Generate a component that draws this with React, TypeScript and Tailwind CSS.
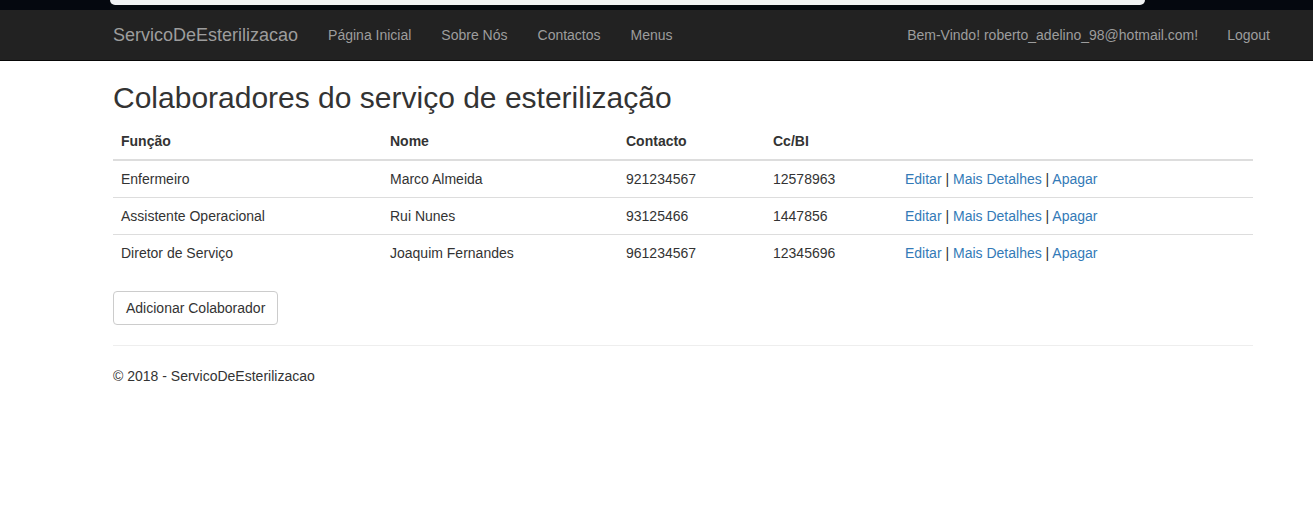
const rows = [
  { funcao: "Enfermeiro", nome: "Marco Almeida", contacto: "921234567", cc: "12578963" },
  { funcao: "Assistente Operacional", nome: "Rui Nunes", contacto: "93125466", cc: "1447856" },
  { funcao: "Diretor de Serviço", nome: "Joaquim Fernandes", contacto: "961234567", cc: "12345696" },
];

function Actions() {
  return (
    <span>
      <a className="text-[#337ab7]">Editar</a> | <a className="text-[#337ab7]">Mais Detalhes</a> |{" "}
      <a className="text-[#337ab7]">Apagar</a>
    </span>
  );
}

export default function App() {
  return (
    <div className="min-h-[522px] bg-white text-[14px] leading-[20px] text-[#333]" style={{ fontFamily: '"Liberation Sans", Arial, sans-serif' }}>
      {/* browser strip */}
      <div className="flex h-[10px] bg-[#05080f]">
        <div className="ml-[110px] h-[5px] w-[1035px] rounded-b-[10px] bg-[#f1f2f4]" />
      </div>

      {/* navbar */}
      <nav className="h-[51px] border-b border-[#080808] bg-[#222]">
        <div className="flex h-[50px] items-center pl-[113px] pr-[43px] text-[#9d9d9d]">
          <span className="text-[18px] leading-[20px]">ServicoDeEsterilizacao</span>
          <div className="ml-[30px] flex gap-[30px]">
            <span>Página Inicial</span>
            <span>Sobre Nós</span>
            <span>Contactos</span>
            <span>Menus</span>
          </div>
          <div className="ml-auto flex gap-[29px]">
            <span>Bem-Vindo! roberto_adelino_98@hotmail.com!</span>
            <span>Logout</span>
          </div>
        </div>
      </nav>

      <main className="ml-[113px] w-[1140px]">
        <h2 className="mt-[20px] mb-[9px] text-[30px] leading-[33px] font-normal">Colaboradores do serviço de esterilização</h2>

        <table className="mb-[20px] w-full border-collapse">
          <thead>
            <tr className="border-b-2 border-[#ddd] text-left font-bold">
              <th className="w-[269px] p-[8px]">Função</th>
              <th className="w-[236px] p-[8px]">Nome</th>
              <th className="w-[147px] p-[8px]">Contacto</th>
              <th className="w-[132px] p-[8px]">Cc/BI</th>
              <th className="p-[8px]"></th>
            </tr>
          </thead>
          <tbody>
            {rows.map((r, i) => (
              <tr key={r.cc} className={i > 0 ? "border-t border-[#ddd]" : ""}>
                <td className="p-[8px]">{r.funcao}</td>
                <td className="p-[8px]">{r.nome}</td>
                <td className="p-[8px]">{r.contacto}</td>
                <td className="p-[8px]">{r.cc}</td>
                <td className="p-[8px]">
                  <Actions />
                </td>
              </tr>
            ))}
          </tbody>
        </table>

        <button className="rounded-[4px] border border-[#ccc] bg-white px-[12px] py-[6px] text-[#333]">Adicionar Colaborador</button>

        <hr className="mt-[20px] mb-[20px] border-t border-[#eee]" />
        <footer>
          <p>© 2018 - ServicoDeEsterilizacao</p>
        </footer>
      </main>
    </div>
  );
}
